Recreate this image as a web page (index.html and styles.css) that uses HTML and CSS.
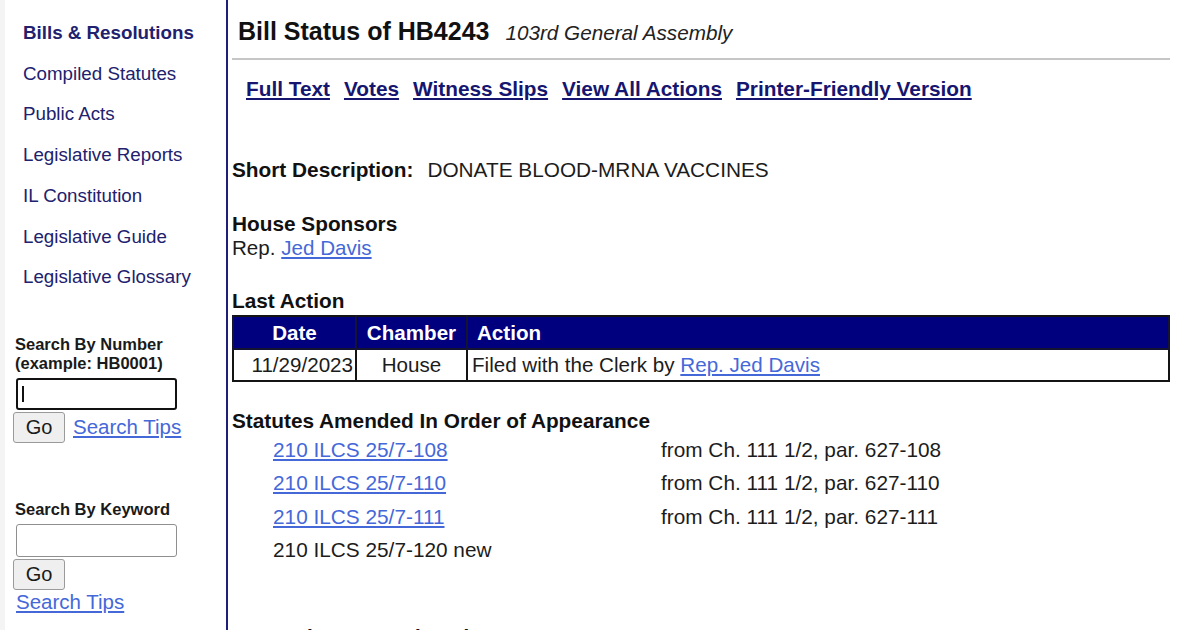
FILE: index.html
```html
<!DOCTYPE html>
<html lang="en">

<head>
   <meta charset="UTF-8">
   <meta name="viewport" content="width=device-width, initial-scale=1.0">
   <title>Bill Status of HB4243</title>
   <link rel="stylesheet" href="styles.css">
</head>

<body>

   <div class="page">
       <aside class="sidebar">
           <ul class="side-nav">
               <li><a href="#" class="current">Bills &amp; Resolutions</a></li>
               <li><a href="#">Compiled Statutes</a></li>
               <li><a href="#">Public Acts</a></li>
               <li><a href="#">Legislative Reports</a></li>
               <li><a href="#">IL Constitution</a></li>
               <li><a href="#">Legislative Guide</a></li>
               <li><a href="#">Legislative Glossary</a></li>
           </ul>

           <form class="search search-number">
               <label for="billnum">Search By Number<br>(example: HB0001)</label>
               <div class="field focused">
                   <input type="text" id="billnum" name="billnum">
               </div>
               <div class="go-row">
                   <button type="button">Go</button>
                   <a href="#" class="tips">Search Tips</a>
               </div>
           </form>

           <form class="search search-keyword">
               <label for="keyword">Search By Keyword</label>
               <div class="field">
                   <input type="text" id="keyword" name="keyword">
               </div>
               <div class="go-row">
                   <button type="button">Go</button>
               </div>
               <a href="#" class="tips">Search Tips</a>
           </form>
       </aside>

       <main class="content">
           <div class="title-row">
               <span class="bill-title">Bill Status of HB4243</span>
               <span class="assembly">103rd General Assembly</span>
           </div>
           <hr class="rule">

           <nav class="bill-links">
               <a href="#">Full Text</a>
               <a href="#">Votes</a>
               <a href="#">Witness Slips</a>
               <a href="#">View All Actions</a>
               <a href="#">Printer-Friendly Version</a>
           </nav>

           <p class="short-desc"><b>Short Description:</b><span class="desc-text">DONATE BLOOD-MRNA VACCINES</span></p>

           <h3 class="sponsors-head">House Sponsors</h3>
           <p class="line">Rep. <a href="#" class="plain-link">Jed Davis</a></p>

           <h3 class="section-head">Last Action</h3>
           <table class="actions">
               <tr>
                   <th class="col-date">Date</th>
                   <th class="col-chamber">Chamber</th>
                   <th class="col-action">Action</th>
               </tr>
               <tr>
                   <td class="col-date">11/29/2023</td>
                   <td class="col-chamber">House</td>
                   <td class="col-action">Filed with the Clerk by <a href="#" class="plain-link">Rep. Jed Davis</a></td>
               </tr>
           </table>

           <h3 class="section-head statutes-head">Statutes Amended In Order of Appearance</h3>
           <div class="statutes">
               <a href="#" class="plain-link">210 ILCS 25/7-108</a>
               <span>from Ch. 111 1/2, par. 627-108</span>
               <a href="#" class="plain-link">210 ILCS 25/7-110</a>
               <span>from Ch. 111 1/2, par. 627-110</span>
               <a href="#" class="plain-link">210 ILCS 25/7-111</a>
               <span>from Ch. 111 1/2, par. 627-111</span>
               <span>210 ILCS 25/7-120 new</span>
               <span></span>
           </div>

           <h3 class="section-head synopsis-head">Synopsis As Introduced</h3>
       </main>
   </div>

</body>

</html>
```

FILE: styles.css
```css
html, body {
    margin: 0;
    height: 100%;
    overflow: hidden;
}

body {
    font-family: "Liberation Sans", Arial, sans-serif;
    color: #1c1c1c;
    background-color: white;
}

.page {
    display: flex;
    min-height: 630px;
}

/* left column */

.sidebar {
    width: 221px;
    flex-shrink: 0;
    border-left: 5px solid #f4f4f4;
    border-right: 2px solid #1f1f7a;
}

.side-nav {
    list-style: none;
    margin: 0;
    padding: 13px 0 0 18px;
}

.side-nav li {
    line-height: 40.7px;
    font-size: 18.75px;
}

.side-nav a {
    color: #21216e;
    text-decoration: none;
}

.side-nav a.current {
    font-weight: bold;
}

.search {
    padding-left: 8px;
}

.search label {
    display: block;
    font-weight: bold;
    font-size: 16.5px;
    line-height: 19px;
    padding-left: 2px;
    color: #1a1a1a;
}

.search-number {
    margin-top: 37.5px;
}

.search-keyword {
    margin-top: 57.5px;
}

.field {
    position: relative;
    margin: 4.5px 0 0 3px;
    width: 161px;
}

.field input {
    display: block;
    width: 161px;
    height: 33px;
    box-sizing: border-box;
    border: 1px solid #8f8f8f;
    border-radius: 3px;
    margin: 0;
}

.focused input {
    height: 32px;
    border: 2px solid #111;
}

/* text caret in the focused box */
.focused::after {
    content: "";
    position: absolute;
    left: 6px;
    top: 8px;
    width: 2px;
    height: 16px;
    background-color: #111;
}

.go-row {
    display: flex;
    align-items: center;
    margin-top: 2px;
}

.go-row button {
    width: 52px;
    height: 31px;
    padding: 0;
    font-family: "Liberation Sans", Arial, sans-serif;
    font-size: 20px;
    color: #1a1a1a;
    background-color: #efefef;
    border: 1px solid #9a9a9a;
    border-radius: 3px;
}

.tips {
    font-size: 20.5px;
    line-height: 24px;
    color: #4568d8;
}

.go-row .tips {
    margin-left: 8px;
}

.search-keyword > .tips {
    display: block;
    margin-left: 3px;
}

/* main column */

.content {
    flex-grow: 1;
    padding: 0 30px 0 4px;
}

.title-row {
    display: flex;
    align-items: baseline;
    margin-top: 16px;
    padding-left: 6px;
    color: #111;
}

.bill-title {
    font-weight: bold;
    font-size: 25px;
    line-height: 30px;
}

.assembly {
    font-style: italic;
    font-size: 20.7px;
    line-height: 30px;
    margin-left: 16px;
    color: #222;
}

.rule {
    margin: 10px 0 0 0;
    border: none;
    height: 2px;
    background-color: #c6c6c6;
}

.bill-links {
    margin-top: 16px;
    padding-left: 14px;
    line-height: 26px;
    display: flex;
    gap: 14px;
}

.bill-links a {
    font-weight: bold;
    font-size: 20.8px;
    color: #161670;
}

.short-desc {
    margin: 56px 0 0 0;
    font-size: 20.8px;
    line-height: 24px;
}

.short-desc b {
    color: #111;
}

.desc-text {
    margin-left: 14px;
}

h3 {
    margin: 0;
    font-size: 20.8px;
    line-height: 24px;
    color: #111;
}

.sponsors-head {
    margin-top: 30px;
}

.line {
    margin: 0;
    font-size: 20.6px;
    line-height: 24px;
}

.plain-link {
    color: #4568d8;
}

.section-head {
    margin-top: 29px;
}

.actions {
    width: 100%;
    margin-top: 2px;
    border-collapse: collapse;
    border: 2px solid #141414;
    font-size: 20.6px;
}

.actions th {
    background-color: #00007f;
    color: white;
    height: 31px;
    padding: 0;
    border: 2px solid #141430;
    border-top: none;
}

.actions td {
    height: 30px;
    padding: 0;
    border: 2px solid #141414;
}

.actions .col-date {
    width: 119px;
}

.actions .col-chamber {
    width: 109px;
    text-align: center;
}

.actions td.col-date {
    text-align: right;
    padding-right: 2px;
}

.actions th.col-action {
    text-align: left;
    padding-left: 9px;
}

.actions td.col-action {
    padding-left: 4px;
}

.statutes-head {
    margin-top: 27px;
}

.statutes {
    display: grid;
    grid-template-columns: 388px 1fr;
    padding-left: 41px;
    font-size: 20.8px;
    line-height: 33.3px;
}

.statutes a {
    justify-self: start;
}

.synopsis-head {
    margin-top: 59px;
}
```
